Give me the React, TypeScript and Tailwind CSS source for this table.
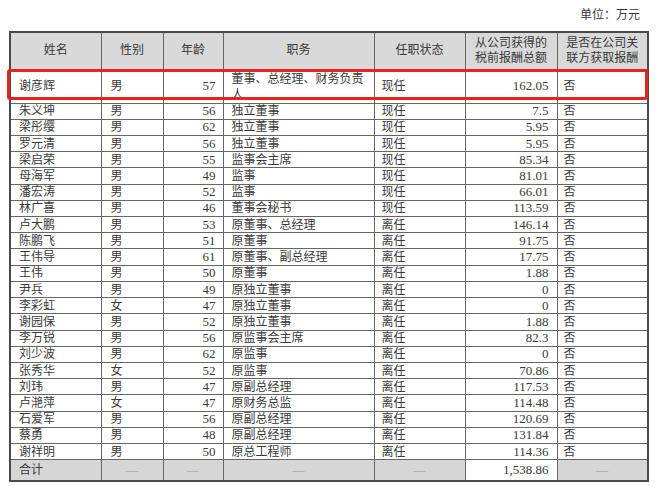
const rows: [string, string, number, string, string, string][] = [
  ["朱义坤", "男", 56, "独立董事", "现任", "7.5"],
  ["梁彤缨", "男", 62, "独立董事", "现任", "5.95"],
  ["罗元清", "男", 56, "独立董事", "现任", "5.95"],
  ["梁启荣", "男", 55, "监事会主席", "现任", "85.34"],
  ["母海军", "男", 49, "监事", "现任", "81.01"],
  ["潘宏涛", "男", 52, "监事", "现任", "66.01"],
  ["林广喜", "男", 46, "董事会秘书", "现任", "113.59"],
  ["卢大鹏", "男", 53, "原董事、总经理", "离任", "146.14"],
  ["陈鹏飞", "男", 51, "原董事", "离任", "91.75"],
  ["王伟导", "男", 61, "原董事、副总经理", "离任", "17.75"],
  ["王伟", "男", 50, "原董事", "离任", "1.88"],
  ["尹兵", "男", 49, "原独立董事", "离任", "0"],
  ["李彩虹", "女", 47, "原独立董事", "离任", "0"],
  ["谢园保", "男", 52, "原独立董事", "离任", "1.88"],
  ["李万锐", "男", 56, "原监事会主席", "离任", "82.3"],
  ["刘少波", "男", 62, "原监事", "离任", "0"],
  ["张秀华", "女", 52, "原监事", "离任", "70.86"],
  ["刘玮", "男", 47, "原副总经理", "离任", "117.53"],
  ["卢滟萍", "女", 47, "原财务总监", "离任", "114.48"],
  ["石爱军", "男", 56, "原副总经理", "离任", "120.69"],
  ["蔡勇", "男", 48, "原副总经理", "离任", "131.84"],
  ["谢祥明", "男", 50, "原总工程师", "离任", "114.36"],
];

const cell = "border border-[#666] p-0 align-middle";

export default function App() {
  return (
    <div className="relative w-[660px] h-[486px] bg-white text-[12px] leading-[14px] text-[#3a3a3a] font-['Liberation_Serif','Noto_Sans_CJK_SC',serif]">
      {/* unit */}
      <div className="flex justify-end h-[31px] pt-[7px] pr-[20px] leading-[16px]">
        <span>单位：万元</span>
      </div>

      <table className="ml-[9px] w-[638px] table-fixed border-collapse border-2 border-[#4a4a4a]">
        <colgroup>
          <col className="w-[91px]" />
          <col className="w-[62px]" />
          <col className="w-[60px]" />
          <col className="w-[151px]" />
          <col className="w-[91px]" />
          <col className="w-[92px]" />
          <col className="w-[91px]" />
        </colgroup>
        <thead>
          <tr className="h-[37px] bg-[#d9d9d9] text-center leading-[15px]">
            <th className={`${cell} font-normal`}>姓名</th>
            <th className={`${cell} font-normal`}>性别</th>
            <th className={`${cell} font-normal`}>年龄</th>
            <th className={`${cell} font-normal`}>职务</th>
            <th className={`${cell} font-normal`}>任职状态</th>
            <th className={`${cell} font-normal`}>
              从公司获得的
              <br />
              税前报酬总额
            </th>
            <th className={`${cell} font-normal`}>
              是否在公司关
              <br />
              联方获取报酬
            </th>
          </tr>
        </thead>
        <tbody>
          <tr className="h-[33px]">
            <td className={`${cell} pl-[8px]`}>谢彦辉</td>
            <td className={`${cell} pl-[9px]`}>男</td>
            <td className={`${cell} pr-[7px] text-right text-[13px]`}>57</td>
            <td className={`${cell} pl-[8px] pr-[4px] !align-top pt-[1px] leading-[16px]`}>董事、总经理、财务负责人</td>
            <td className={`${cell} pl-[7px]`}>现任</td>
            <td className={`${cell} pr-[8px] text-right text-[13px]`}>162.05</td>
            <td className={`${cell} pl-[6px]`}>否</td>
          </tr>
          {rows.map((r) => (
            <tr key={r[0]} className="h-[16.23px]">
              <td className={`${cell} pl-[8px]`}>{r[0]}</td>
              <td className={`${cell} pl-[9px]`}>{r[1]}</td>
              <td className={`${cell} pr-[7px] text-right text-[13px]`}>{r[2]}</td>
              <td className={`${cell} pl-[8px]`}>{r[3]}</td>
              <td className={`${cell} pl-[7px]`}>{r[4]}</td>
              <td className={`${cell} pr-[8px] text-right text-[13px]`}>{r[5]}</td>
              <td className={`${cell} pl-[6px]`}>否</td>
            </tr>
          ))}
          <tr className="h-[21px] bg-[#d6d6d6]">
            <td className={`${cell} pl-[8px]`}>合计</td>
            <td className={`${cell} text-center text-[#999]`}>—</td>
            <td className={`${cell} text-center text-[#999]`}>—</td>
            <td className={`${cell} text-center text-[#999]`}>—</td>
            <td className={`${cell} text-center text-[#999]`}>—</td>
            <td className={`${cell} pr-[8px] text-right bg-white text-[13px]`}>1,538.86</td>
            <td className={`${cell} text-center text-[#999]`}>—</td>
          </tr>
        </tbody>
      </table>

      {/* highlight box over first row */}
      <div className="absolute left-[7px] top-[69px] w-[641px] h-[31px] border-[3px] border-[#e8221c] rounded-[3px]" />
    </div>
  );
}
